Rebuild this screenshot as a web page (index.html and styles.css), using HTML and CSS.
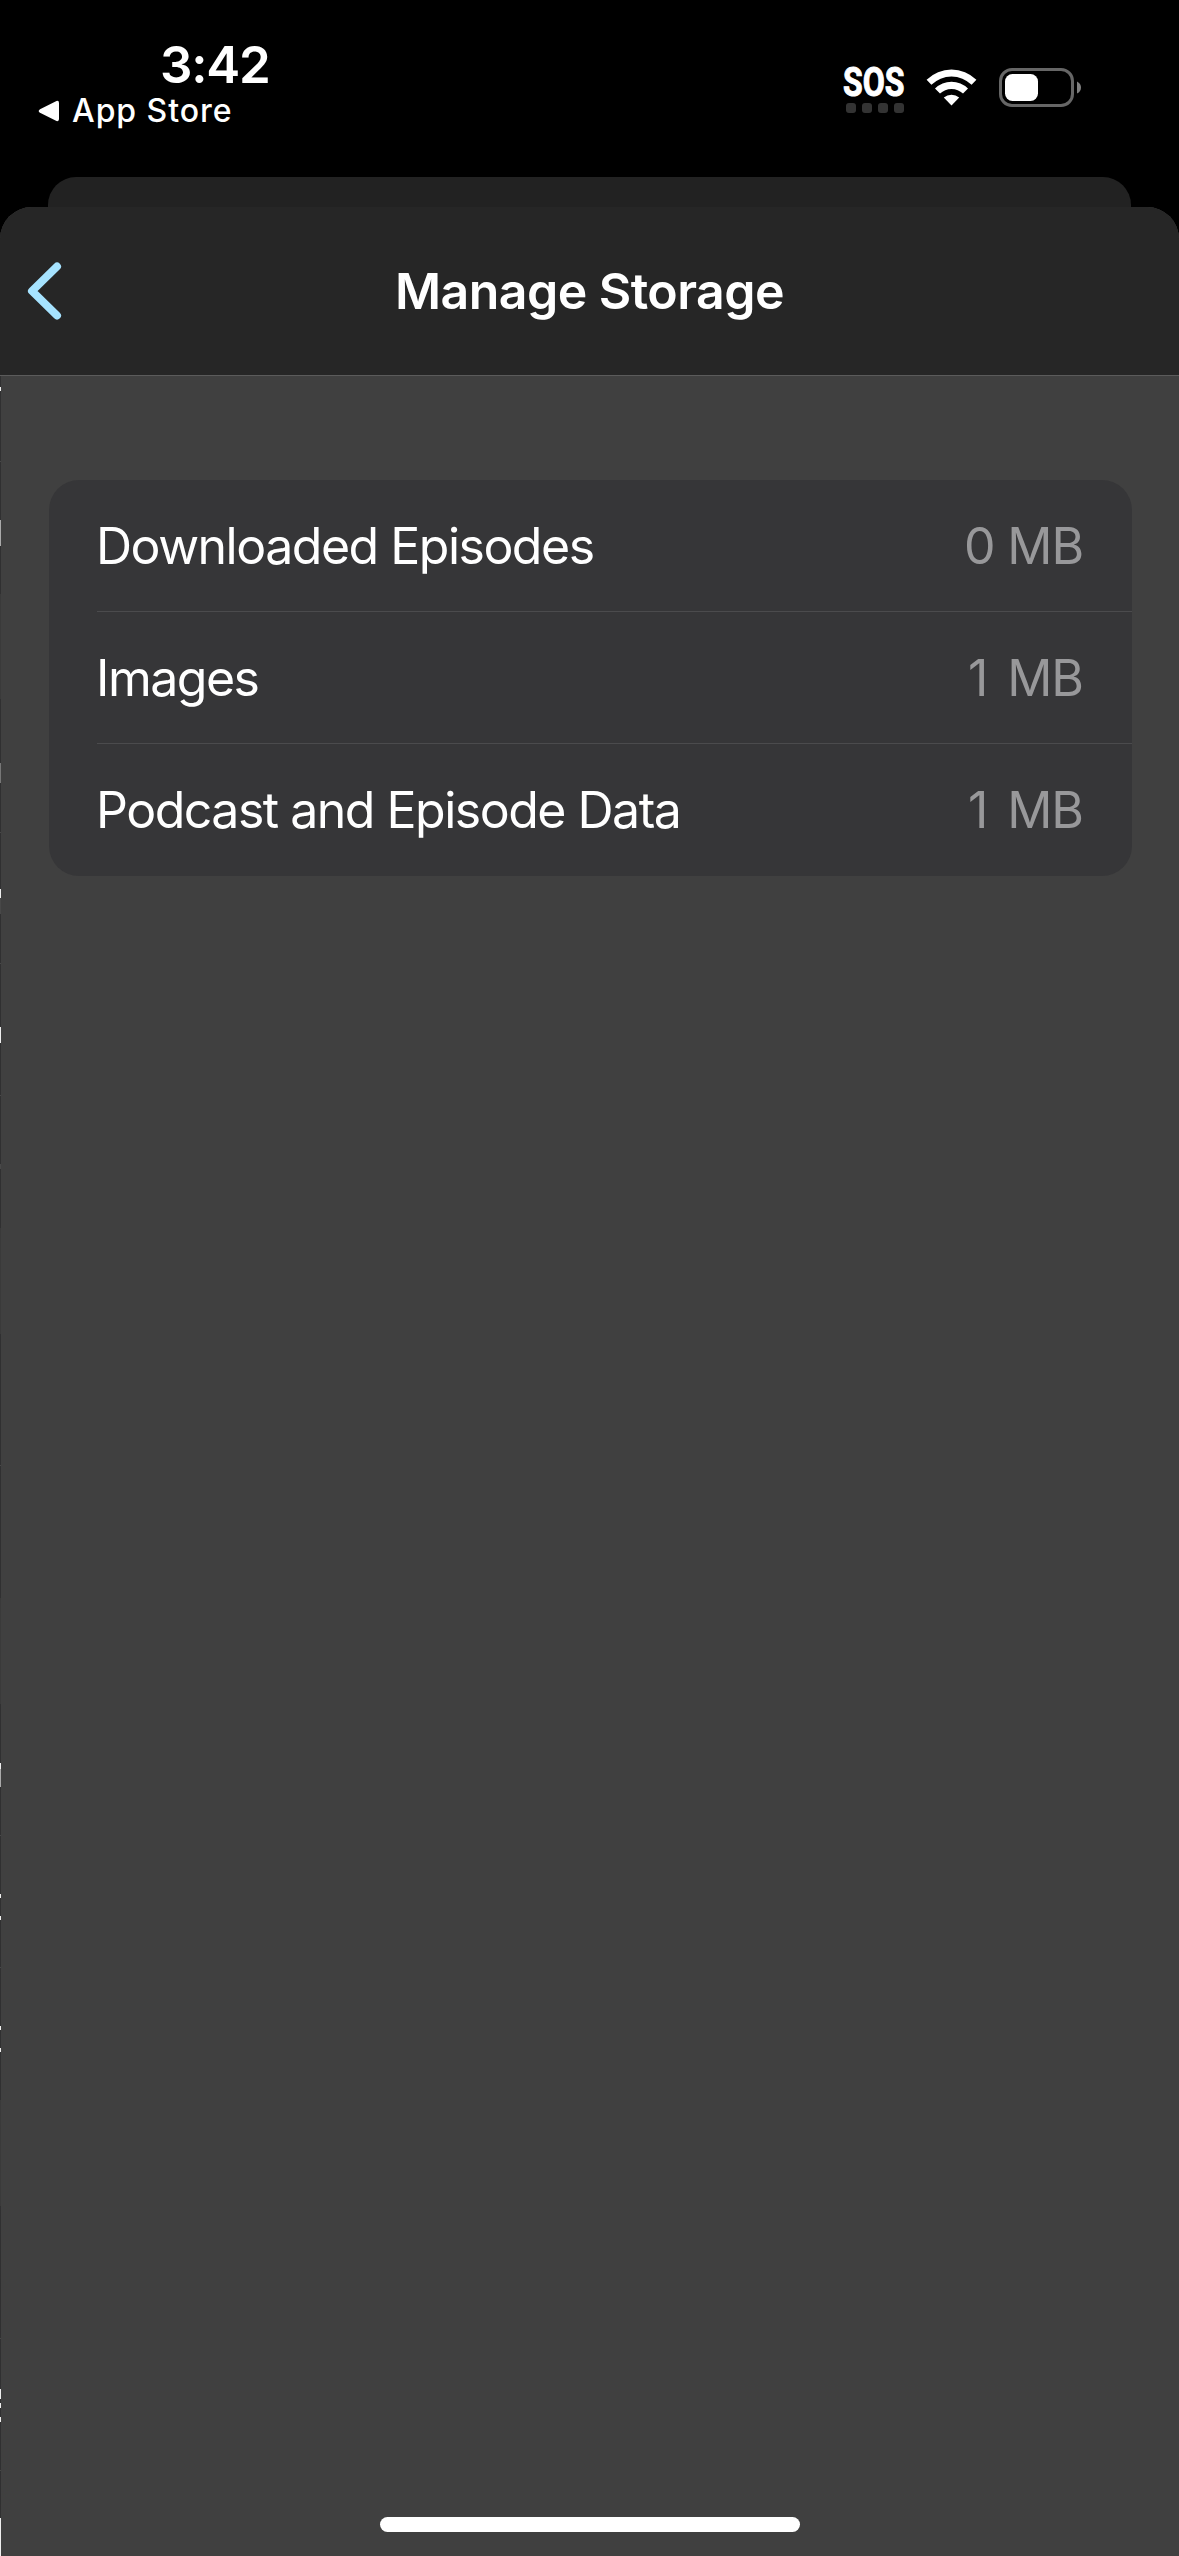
FILE: index.html
```html
<!DOCTYPE html>
<html lang="en">
<head>
    <meta charset="utf-8">
    <title>Manage Storage</title>
    <meta name="viewport" content="width=device-width, initial-scale=1">
    <link rel="stylesheet" href="styles.css">
</head>
<body>
    <div class="status-bar">
        <div class="status-left">
            <div class="time">3:42</div>
            <div class="back-to-app">
                <svg class="back-arrow" width="22" height="22" viewBox="0 0 22 22">
                    <path d="M2 9.2 L18.5 1 Q21 0.3 21 3 V19 Q21 21.7 18.5 21 L2 12.8 Q-0.6 11 2 9.2 Z" fill="#fff"/>
                </svg>
                <span>App Store</span>
            </div>
        </div>
        <div class="status-right">
            <div class="signal">
                <span class="sos">SOS</span>
                <div class="dots"><i></i><i></i><i></i><i></i></div>
            </div>
            <svg class="wifi" width="51" height="38" viewBox="0 0 51 38">
                <path d="M0.6 11.8 A35.5 35.5 0 0 1 50.4 11.8 L45.6 16.8 A28.6 28.6 0 0 0 5.4 16.8 Z" fill="#fff"/>
                <path d="M9 20.5 A23.5 23.5 0 0 1 42 20.5 L37 25.6 A16.4 16.4 0 0 0 14 25.6 Z" fill="#fff"/>
                <path d="M17.8 29.6 A11.5 11.5 0 0 1 33.2 29.6 L25.5 37.5 Z" fill="#fff"/>
            </svg>
            <svg class="battery" width="83" height="40" viewBox="0 0 83 40">
                <rect x="1.5" y="1.5" width="72" height="36" rx="11.5" fill="none" stroke="#666" stroke-width="3"/>
                <rect x="6" y="6" width="33" height="27" rx="7.5" fill="#fff"/>
                <path d="M78 13.5 Q82 15.5 82 19.5 Q82 23.5 78 25.5 Z" fill="#808080"/>
            </svg>
        </div>
    </div>

    <div class="sheet-behind"></div>
    <div class="sheet">
        <div class="nav-bar">
            <svg class="chevron" width="36" height="60" viewBox="0 0 36 60">
                <path d="M30 5.5 L5 30 L30 54.5" fill="none" stroke="#a6e3ff" stroke-width="8" stroke-linecap="round" stroke-linejoin="round"/>
            </svg>
            <h1>Manage Storage</h1>
        </div>
        <div class="content">
            <ul class="list">
                <li><span>Downloaded Episodes</span><span class="size">0 MB</span></li>
                <li><span>Images</span><span class="size one">1 MB</span></li>
                <li><span>Podcast and Episode Data</span><span class="size one">1 MB</span></li>
            </ul>
            <div class="home-indicator"></div>
            <!-- edge of the previous screen, still sliding out on the left -->
            <svg class="edge" width="1" height="2180" viewBox="0 376 1 2180" shape-rendering="crispEdges">
                <path d="M0 376h1v2180h-1z" fill="#3a3a3a"/>
                <path d="M0 376h1v218h-1z M0 699h1v529h-1z M0 1334h1v264h-1z M0 1704h1v396h-1z M0 2206h1v350h-1z" fill="#303031"/>
                <path d="M0 461h1v1h-1z M0 832h1v1h-1z M0 963h1v1h-1z M0 1095h1v1h-1z M0 1465h1v1h-1z M0 1835h1v1h-1z M0 1967h1v1h-1z M0 2338h1v1h-1z M0 2470h1v1h-1z M0 898h1v16h-1z M0 1164h1v5h-1z" fill="#484848"/>
                <path d="M0 520h1v26h-1z M0 1769h1v18h-1z" fill="#aaa"/>
                <path d="M0 763h1v20h-1z" fill="#777"/>
                <path d="M0 387h1v4h-1z M0 889h1v9h-1z M0 1027h1v16h-1z M0 1763h1v6h-1z M0 1894h1v4h-1z M0 1916h1v4h-1z M0 2026h1v4h-1z M0 2048h1v4h-1z M0 2389h1v10h-1z M0 2403h1v5h-1z M0 2417h1v5h-1z M0 2518h1v38h-1z" fill="#eee"/>
            </svg>
        </div>
    </div>
</body>
</html>
```
FILE: styles.css
```css
* {
    box-sizing: border-box;
}
body {
    margin: 0;
    height: 2556px;
    display: flex;
    flex-direction: column;
    overflow: hidden;
    background-color: #000;
    color: #fff;
    font-family: Inter, "Liberation Sans", sans-serif;
}
svg {
    display: block;
}

/* status bar */
.status-bar {
    height: 177px;
    flex: none;
    display: flex;
    justify-content: space-between;
    align-items: flex-start;
}
.status-left {
    padding: 40px 0 0 38px;
}
.time {
    padding-left: 122px;
    font-size: 51px;
    font-weight: 600;
    line-height: 50px;
    letter-spacing: -1.2px;
}
.back-to-app {
    display: flex;
    align-items: center;
    gap: 12px;
    font-size: 32px;
    font-weight: 500;
    line-height: 42px;
    letter-spacing: 0.95px;
}
.status-right {
    display: flex;
    padding: 64px 97px 0 0;
}
.signal {
    width: 62px;
}
.sos {
    display: block;
    font-family: Roboto, "Liberation Sans", sans-serif;
    font-size: 41px;
    font-weight: 700;
    line-height: 39px;
    -webkit-text-stroke: 1px #fff;
    transform: translate(-1px, -1px) scaleX(0.78);
    transform-origin: left;
}
.dots {
    display: flex;
    gap: 6px;
    padding-left: 2px;
}
.dots i {
    width: 10px;
    height: 10px;
    border-radius: 3px;
    background-color: #333;
}
.wifi {
    margin: 4px 0 0 20px;
}
.battery {
    margin: 4px 0 0 22px;
}

/* sheets */
.sheet-behind {
    height: 30px;
    flex: none;
    margin: 0 48px;
    border-radius: 28px 28px 0 0;
    background-color: #222;
}
.sheet {
    flex: 1;
    display: flex;
    flex-direction: column;
    border-radius: 32px 32px 0 0;
    overflow: hidden;
    background-color: #404040;
}
.nav-bar {
    height: 169px;
    flex: none;
    display: grid;
    grid-template-columns: 120px 1fr 120px;
    align-items: center;
    background-color: #262626;
    border-bottom: 1px solid #5b5b5b;
}
.chevron {
    margin: 0 0 1px 27px;
}
h1 {
    margin: 0;
    font-size: 50px;
    font-weight: 600;
    line-height: 60px;
    letter-spacing: -0.55px;
    text-align: center;
}
.content {
    position: relative;
    flex: 1;
    display: flex;
    flex-direction: column;
    justify-content: space-between;
    align-items: center;
    padding: 104px 47px 24px 49px;
}
.list {
    width: 100%;
    margin: 0;
    padding: 0 0 0 48px;
    list-style: none;
    border-radius: 30px;
    background-color: #363638;
}
.list li {
    height: 132px;
    display: flex;
    justify-content: space-between;
    align-items: center;
    padding-right: 47px;
    border-bottom: 1px solid #4b4b4d;
    font-size: 50px;
    letter-spacing: -1.5px;
}
.list li span:first-child {
    margin-left: -1px;
}
.list li:last-child {
    border-bottom: none;
}
.size {
    padding-right: 2px;
    letter-spacing: -1.1px;
    color: #98989a;
}
.one {
    word-spacing: 7px;
}
.home-indicator {
    width: 420px;
    height: 15px;
    margin-right: 1px;
    border-radius: 8px;
    background-color: #fff;
}
.edge {
    position: absolute;
    left: 0;
    top: 0;
}
```
